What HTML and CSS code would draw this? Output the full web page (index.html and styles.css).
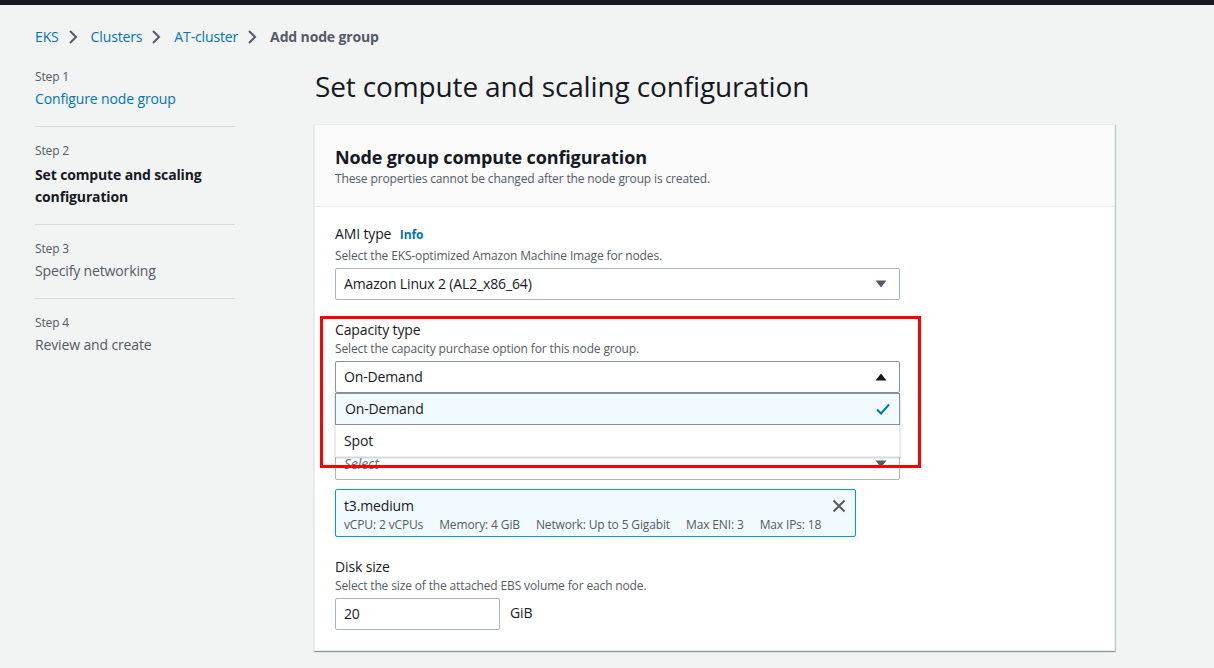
FILE: index.html
```html
<!DOCTYPE html>
<html>
<head>
<meta charset="utf-8">
<link rel="stylesheet" href="styles.css">
</head>
<body>
<div class="topbar"></div>
<nav class="crumbs">
  <a class="crumb-link">EKS</a>
  <svg class="chev" viewBox="0 0 16 16" width="16" height="16"><path d="M5 2l6 6-6 6" fill="none" stroke="#545b64" stroke-width="2"/></svg>
  <a class="crumb-link">Clusters</a>
  <svg class="chev" viewBox="0 0 16 16" width="16" height="16"><path d="M5 2l6 6-6 6" fill="none" stroke="#545b64" stroke-width="2"/></svg>
  <a class="crumb-link">AT-cluster</a>
  <svg class="chev" viewBox="0 0 16 16" width="16" height="16"><path d="M5 2l6 6-6 6" fill="none" stroke="#545b64" stroke-width="2"/></svg>
  <span class="crumb-current">Add node group</span>
</nav>

<div class="layout">
  <aside class="steps">
    <div class="step">
      <div class="step-num">Step 1</div>
      <a class="step-link">Configure node group</a>
    </div>
    <div class="step">
      <div class="step-num">Step 2</div>
      <div class="step-current">Set compute and scaling configuration</div>
    </div>
    <div class="step">
      <div class="step-num">Step 3</div>
      <div class="step-off">Specify networking</div>
    </div>
    <div class="step">
      <div class="step-num">Step 4</div>
      <div class="step-off">Review and create</div>
    </div>
  </aside>

  <main class="main">
    <h1 class="title">Set compute and scaling configuration</h1>
    <section class="panel">
      <header class="panel-head">
        <h2 class="panel-title">Node group compute configuration</h2>
        <p class="panel-desc">These properties cannot be changed after the node group is created.</p>
      </header>
      <div class="panel-body">
        <div class="field">
          <div class="label with-info">AMI type <span class="info">Info</span></div>
          <div class="desc">Select the EKS-optimized Amazon Machine Image for nodes.</div>
          <div class="select">
            <span>Amazon Linux 2 (AL2_x86_64)</span>
            <svg class="caret" viewBox="0 0 12 8" width="12" height="8"><path d="M0.5 0.5h11L6 7.5z" fill="#545b64"/></svg>
          </div>
        </div>

        <div class="field">
          <div class="label">Capacity type</div>
          <div class="desc">Select the capacity purchase option for this node group.</div>
          <div class="select-wrap">
            <div class="select open">
              <span>On-Demand</span>
              <svg class="caret" viewBox="0 0 12 8" width="12" height="8"><path d="M0.5 7.5h11L6 0.5z" fill="#16191f"/></svg>
            </div>
            <ul class="menu">
              <li class="opt selected">
                <span>On-Demand</span>
                <svg viewBox="0 0 16 16" width="16" height="16"><path d="M2 8.5l4 4 8-9" fill="none" stroke="#0073bb" stroke-width="2"/></svg>
              </li>
              <li class="opt">Spot</li>
            </ul>
          </div>
        </div>

        <div class="field instance">
          <div class="label covered">Instance types</div>
          <div class="desc covered">Select instance types you prefer for this node group.</div>
          <div class="select">
            <span class="placeholder">Select</span>
            <svg class="caret" viewBox="0 0 12 8" width="12" height="8"><path d="M0.5 0.5h11L6 7.5z" fill="#545b64"/></svg>
          </div>
          <div class="token">
            <div class="token-main">
              <div class="token-title">t3.medium</div>
              <div class="token-tags">
                <span>vCPU: 2 vCPUs</span>
                <span>Memory: 4 GiB</span>
                <span>Network: Up to 5 Gigabit</span>
                <span>Max ENI: 3</span>
                <span>Max IPs: 18</span>
              </div>
            </div>
            <svg class="x" viewBox="0 0 16 16" width="16" height="16"><path d="M2.5 2.5l11 11M13.5 2.5l-11 11" fill="none" stroke="#545b64" stroke-width="2"/></svg>
          </div>
        </div>

        <div class="field">
          <div class="label">Disk size</div>
          <div class="desc">Select the size of the attached EBS volume for each node.</div>
          <div class="disk-row">
            <div class="input">20</div>
            <span class="unit">GiB</span>
          </div>
        </div>
      </div>
    </section>
  </main>
</div>
<div class="highlight"></div>
</body>
</html>
```

FILE: styles.css
```css
* { box-sizing: border-box; }
html, body { margin: 0; padding: 0; }
body {
  position: relative;
  width: 1214px;
  height: 668px;
  overflow: hidden;
  background: #f2f3f3;
  font-family: "Open Sans", "Noto Sans", sans-serif;
  letter-spacing: -0.01em;
  color: #16191f;
  font-size: 14px;
  line-height: 22px;
}
.topbar { height: 5px; background: #16191f; }

.crumbs {
  display: flex;
  align-items: center;
  padding: 20px 0 0 35px;
  height: 43px;
  font-size: 14px;
}
.crumbs .chev { margin: 0 10px 0 6px; }
.crumb-link { color: #0073bb; }
.crumb-current { color: #545b64; font-weight: 700; }

.layout {
  display: flex;
  padding: 20px 0 0 35px;
}
.steps { width: 200px; flex: none; padding-top: 1px; }
.step {
  padding-bottom: 16px;
  margin-bottom: 16px;
  border-bottom: 1px solid #d5dbdb;
}
.step:last-child { border-bottom: none; }
.step-num { font-size: 12px; line-height: 16px; color: #545b64; margin-bottom: 3px; }
.step-link { color: #0073bb; display: block; }
.step-current { font-weight: 700; padding-top: 2px; }
.step-off { color: #545b64; }

.main { margin-left: 79px; width: 801px; }
.title {
  margin: 0 0 20px 1px;
  font-size: 28px;
  line-height: 36px;
  font-weight: 400;
}
.panel {
  background: #fff;
  border: 1px solid #eaeded;
  box-shadow: 0 1px 1px rgba(0, 28, 36, 0.3), 1px 1px 1px rgba(0, 28, 36, 0.15);
}
.panel-head {
  background: #fafafa;
  border-bottom: 1px solid #eaeded;
  padding: 20px 20px 19px;
}
.panel-title { margin: 0; font-size: 18px; line-height: 24px; font-weight: 700; }
.panel-desc { margin: 2px 0 0; font-size: 12px; line-height: 16px; color: #545b64; }

.panel-body { padding: 16px 20px 20px; }
.field { margin-bottom: 19px; }
.field:last-child { margin-bottom: 0; }
.label { font-size: 14px; line-height: 22px; }
.label.with-info { margin-bottom: 2px; }
.info { font-size: 12px; font-weight: 700; color: #0073bb; margin-left: 5px; }
.desc { font-size: 12px; line-height: 16px; color: #545b64; margin: 0 0 4px; }
.covered { visibility: hidden; }
.instance .desc { margin-bottom: -2px; }

.select {
  display: flex;
  align-items: center;
  justify-content: space-between;
  width: 565px;
  height: 32px;
  padding: 0 12px 0 8px;
  border: 1px solid #aab7b8;
  border-radius: 2px;
  background: #fff;
}
.select.open { border-color: #879596; }
.placeholder { color: #687078; font-style: italic; }

.select-wrap { position: relative; }
.menu {
  position: absolute;
  left: 0;
  top: 32px;
  width: 565px;
  margin: 0;
  padding: 0;
  list-style: none;
  background: #fff;
  border: 1px solid #eaeded;
  border-top: none;
  box-shadow: 0 1px 2px rgba(0, 28, 36, 0.25);
  z-index: 2;
}
.opt {
  display: flex;
  align-items: center;
  justify-content: space-between;
  height: 31px;
  padding: 0 8px;
}
.opt.selected {
  background: #f1faff;
  border: 1px solid #879596;
  margin: 0 -1px;
  padding: 0 8px 0 9px;
  height: 32px;
}

.token {
  display: flex;
  justify-content: space-between;
  align-items: flex-start;
  width: 521px;
  margin-top: 9px;
  padding: 5px 8px 3px;
  border: 1px solid #00a1c9;
  border-radius: 2px;
  background: #f1faff;
}
.token-title { font-size: 14px; line-height: 22px; }
.token-tags { display: flex; gap: 16px; font-size: 12px; line-height: 16px; color: #545b64; }
.token .x { margin-top: 3px; }

.disk-row { display: flex; align-items: center; gap: 10px; }
.input {
  width: 165px;
  height: 32px;
  padding: 4px 8px;
  border: 1px solid #aab7b8;
  border-radius: 2px;
  background: #fff;
}
.unit { margin-top: -2px; }

.highlight {
  position: absolute;
  left: 320px;
  top: 316px;
  width: 601px;
  height: 152px;
  border: 3px solid #ff0000;
  pointer-events: none;
  z-index: 5;
}
```
